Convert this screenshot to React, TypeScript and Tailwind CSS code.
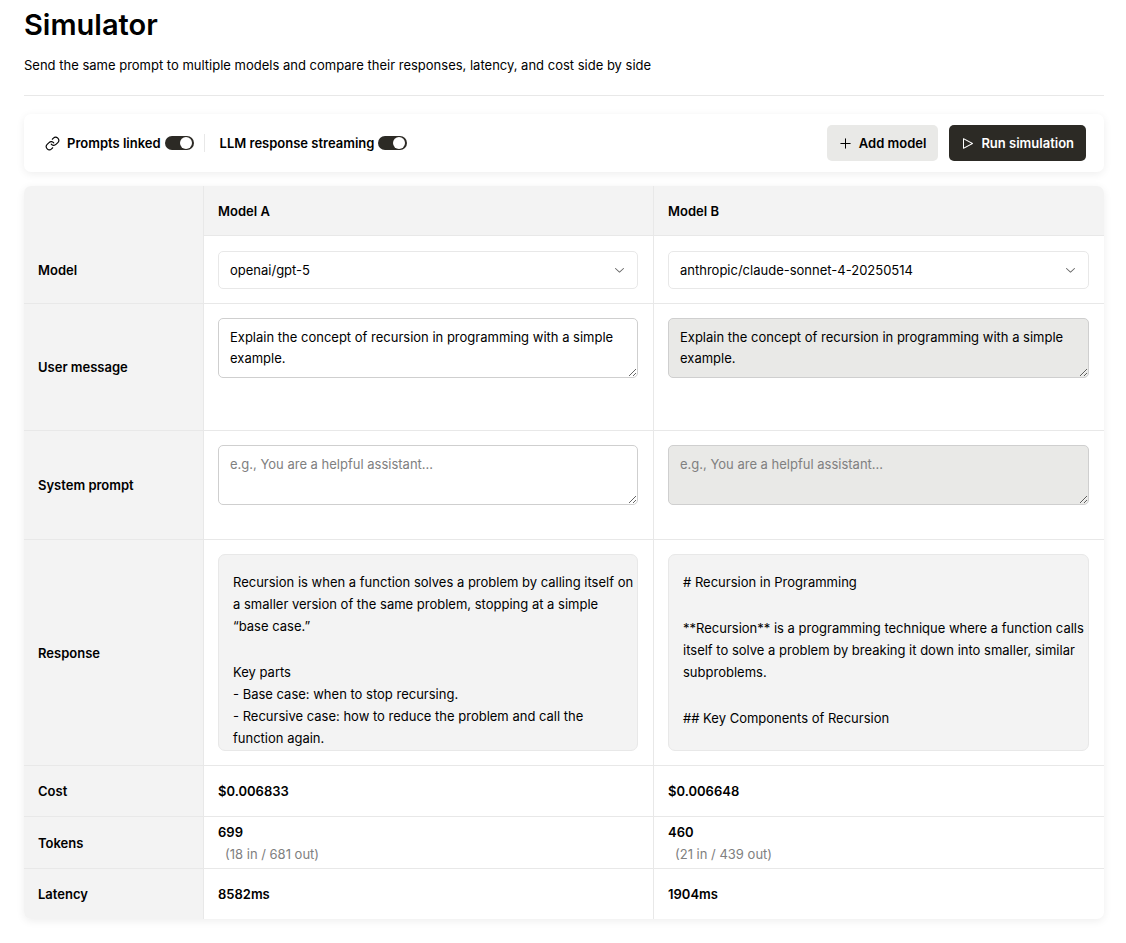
import { useState } from "react";
import type { ReactNode } from "react";
import { Link } from "lucide-react";
import { RxChevronDown, RxPlay, RxPlus } from "react-icons/rx";

const MODELS = ["openai/gpt-5", "anthropic/claude-sonnet-4-20250514"];

const COLUMNS = [
  {
    name: "Model A",
    model: MODELS[0],
    linked: false,
    response: [
      "Recursion is when a function solves a problem by calling itself on a smaller version of the same problem, stopping at a simple “base case.”",
      "Key parts\n- Base case: when to stop recursing.\n- Recursive case: how to reduce the problem and call the function again.",
    ],
    cost: "$0.006833",
    tokens: "699",
    detail: "(18 in / 681 out)",
    latency: "8582ms",
  },
  {
    name: "Model B",
    model: MODELS[1],
    linked: true,
    response: [
      "# Recursion in Programming",
      "**Recursion** is a programming technique where a function calls itself to solve a problem by breaking it down into smaller, similar subproblems.",
      "## Key Components of Recursion",
    ],
    cost: "$0.006648",
    tokens: "460",
    detail: "(21 in / 439 out)",
    latency: "1904ms",
  },
];

function Toggle({ id, label }: { id: string; label: string }) {
  return (
    <div className="flex items-center gap-1">
      <label htmlFor={id} className="font-semibold">
        {label}
      </label>
      <input
        id={id}
        type="checkbox"
        role="switch"
        defaultChecked
        className="flex h-[14px] w-[29px] shrink-0 cursor-pointer appearance-none items-center rounded-full bg-[#c9c9c6] px-px before:size-3 before:rounded-full before:bg-white checked:justify-end checked:bg-[#2c2a25] checked:px-[2px]"
      />
    </div>
  );
}

function RowLabel({ children, last = false }: { children: ReactNode; last?: boolean }) {
  return (
    <th
      scope="row"
      className={
        last
          ? "rounded-bl-[7px] border-r border-[#e8e8e8] bg-[#f3f3f3] px-3.5 text-left font-semibold"
          : "border-r border-b border-[#e8e8e8] bg-[#f3f3f3] px-3.5 text-left font-semibold"
      }
    >
      {children}
    </th>
  );
}

const CELL = "border-r border-b border-[#e8e8e8] pl-3.5 pr-[15px] last:border-r-0";

function PromptBox({
  label,
  value,
  placeholder,
  disabled,
  onChange,
}: {
  label: string;
  value: string;
  placeholder?: string;
  disabled: boolean;
  onChange: (value: string) => void;
}) {
  return (
    <textarea
      aria-label={label}
      value={value}
      placeholder={placeholder}
      disabled={disabled}
      onChange={(e) => onChange(e.target.value)}
      className="block h-[60px] w-full resize-y rounded-[5px] border border-[#cfcfcf] bg-white px-[11px] py-2 leading-[21px] text-black placeholder:text-[#808080] disabled:bg-[#e9e9e7]"
    />
  );
}

export default function App() {
  const [message, setMessage] = useState(
    "Explain the concept of recursion in programming with a simple example.",
  );
  const [system, setSystem] = useState("");

  return (
    <main className="bg-white pt-1 pr-[22px] pb-6 pl-6 font-['Inter','Liberation_Sans',sans-serif] text-[13px] leading-[22px] text-black">
      <header className="border-b border-[#e8e8e8] pb-[19px]">
        <h1 className="text-[29px] leading-[42px] font-semibold">Simulator</h1>
        <p className="mt-2">
          Send the same prompt to multiple models and compare their responses, latency, and cost side by side
        </p>
      </header>

      <section className="mt-[18px] flex flex-wrap items-center justify-between gap-3 rounded-[7px] bg-white py-[11px] pr-[18px] pl-[21px] shadow-[0_2px_8px_rgba(0,0,0,0.07)]">
        <div className="flex items-center gap-[10px]">
          <div className="flex items-center gap-[7px]">
            <Link size={15} strokeWidth={1.8} />
            <Toggle id="linked" label="Prompts linked" />
          </div>
          <div className="h-[18px] w-px bg-[#e8e8e8]" />
          <div className="pl-[5px]">
            <Toggle id="streaming" label="LLM response streaming" />
          </div>
        </div>
        <div className="flex items-center gap-[11px]">
          <button
            type="button"
            className="flex h-9 items-center gap-1.5 rounded-[5px] bg-[#e9e9e7] pr-3 pl-[11px] font-semibold"
          >
            <RxPlus size={15} />
            Add model
          </button>
          <button
            type="button"
            className="flex h-9 items-center gap-1.5 rounded-[5px] bg-[#2c2a25] pr-3 pl-[11px] font-semibold text-white"
          >
            <RxPlay size={15} />
            Run simulation
          </button>
        </div>
      </section>

      <table className="mt-3.5 w-full table-fixed border-separate border-spacing-0 rounded-[7px] bg-white shadow-[0_2px_8px_rgba(0,0,0,0.07)]">
        <colgroup>
          <col className="w-[180px]" />
          <col />
          <col />
        </colgroup>
        <thead>
          <tr className="h-[50px]">
            <td className="rounded-tl-[7px] border-r border-[#e8e8e8] bg-[#f3f3f3]" />
            {COLUMNS.map((c) => (
              <th
                key={c.name}
                scope="col"
                className="border-r border-b border-[#e8e8e8] bg-[#f3f3f3] px-3.5 text-left font-semibold last:rounded-tr-[7px] last:border-r-0"
              >
                {c.name}
              </th>
            ))}
          </tr>
        </thead>
        <tbody>
          <tr className="h-[68px]">
            <RowLabel>Model</RowLabel>
            {COLUMNS.map((c) => (
              <td key={c.name} className={CELL}>
                <div className="grid items-center">
                  <select
                    aria-label={c.name}
                    defaultValue={c.model}
                    className="col-start-1 row-start-1 h-[38px] w-full appearance-none rounded-[5px] border border-[#e8e8e8] bg-white pr-8 pl-[11px]"
                  >
                    {MODELS.map((m) => (
                      <option key={m}>{m}</option>
                    ))}
                  </select>
                  <RxChevronDown
                    size={15}
                    className="pointer-events-none col-start-1 row-start-1 mr-[11px] justify-self-end text-[#666666]"
                  />
                </div>
              </td>
            ))}
          </tr>
          <tr className="h-[127px]">
            <RowLabel>User message</RowLabel>
            {COLUMNS.map((c) => (
              <td key={c.name} className={`${CELL} pt-3.5 align-top`}>
                <PromptBox
                  label={`User message, ${c.name}`}
                  value={message}
                  disabled={c.linked}
                  onChange={setMessage}
                />
              </td>
            ))}
          </tr>
          <tr className="h-[109px]">
            <RowLabel>System prompt</RowLabel>
            {COLUMNS.map((c) => (
              <td key={c.name} className={`${CELL} pt-3.5 align-top`}>
                <PromptBox
                  label={`System prompt, ${c.name}`}
                  value={system}
                  placeholder="e.g., You are a helpful assistant..."
                  disabled={c.linked}
                  onChange={setSystem}
                />
              </td>
            ))}
          </tr>
          <tr>
            <RowLabel>Response</RowLabel>
            {COLUMNS.map((c) => (
              <td key={c.name} className={`${CELL} py-3.5`}>
                <div className="flex h-[197px] flex-col gap-6 overflow-hidden rounded-[7px] border border-[#e8e8e8] bg-[#f3f3f3] pt-4 pr-0.5 pl-3.5">
                  {c.response.map((text) => (
                    <p key={text} className="shrink-0 whitespace-pre-wrap">
                      {text}
                    </p>
                  ))}
                </div>
              </td>
            ))}
          </tr>
          <tr className="h-[51px]">
            <RowLabel>Cost</RowLabel>
            {COLUMNS.map((c) => (
              <td key={c.name} className={`${CELL} font-semibold`}>
                {c.cost}
              </td>
            ))}
          </tr>
          <tr className="h-[52px]">
            <RowLabel>Tokens</RowLabel>
            {COLUMNS.map((c) => (
              <td key={c.name} className={CELL}>
                <div className="font-semibold">{c.tokens}</div>
                <div className="pl-[7px] text-[#808080]">{c.detail}</div>
              </td>
            ))}
          </tr>
          <tr className="h-[50px]">
            <RowLabel last>Latency</RowLabel>
            {COLUMNS.map((c) => (
              <td
                key={c.name}
                className="border-r border-[#e8e8e8] px-3.5 font-semibold last:border-r-0"
              >
                {c.latency}
              </td>
            ))}
          </tr>
        </tbody>
      </table>
    </main>
  );
}
